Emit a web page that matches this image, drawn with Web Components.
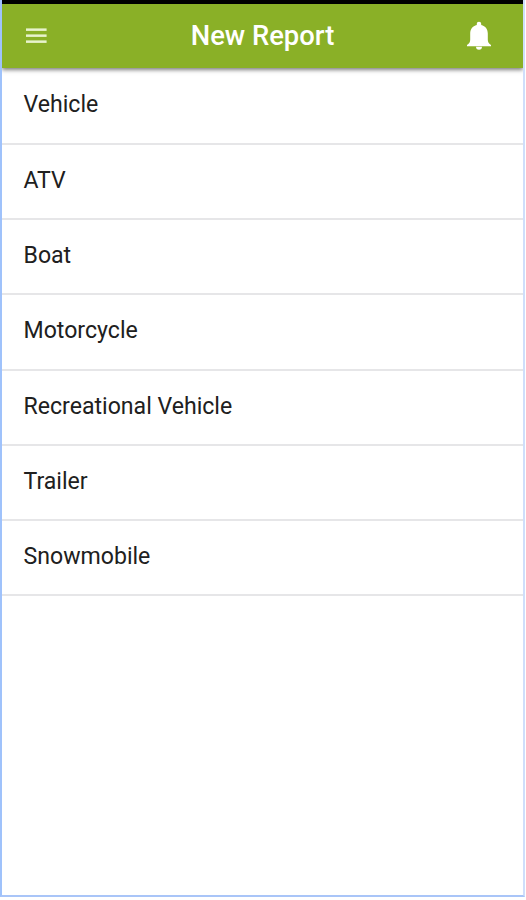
<!DOCTYPE html>
<html lang="en">
<head>
<meta charset="utf-8">
<title>New Report</title>
<style>
html, body { margin: 0; height: 900px; background: #fff; overflow: hidden; }
body { font-family: Roboto, "Noto Sans", sans-serif; }
</style>
</head>
<body>
<report-screen>
  <app-bar slot="bar">New Report</app-bar>
  <list-row>Vehicle</list-row>
  <list-row>ATV</list-row>
  <list-row>Boat</list-row>
  <list-row>Motorcycle</list-row>
  <list-row>Recreational Vehicle</list-row>
  <list-row>Trailer</list-row>
  <list-row>Snowmobile</list-row>
</report-screen>
<script>
function define(name, markup) {
  customElements.define(name, class extends HTMLElement {
    constructor() {
      super();
      this.attachShadow({ mode: "open" }).innerHTML = markup;
    }
  });
}

define("report-screen", `
  <style>
    :host { display: flex; flex-direction: column; box-sizing: border-box; width: 525px; height: 897px;
      border-left: 2px solid #9fc2fb; border-right: 2px solid #cfdefb; border-bottom: 2px solid #a9c5f8; background: #fff; }
    .status { height: 4px; background: #000; flex: none; }
    main { display: flex; flex-direction: column; padding-top: 1.2px; }
  </style>
  <div class="status"></div>
  <slot name="bar"></slot>
  <main><slot></slot></main>`);

define("menu-icon", `
  <style>:host { display: block; width: 22px; height: 16px; } svg { display: block; }</style>
  <svg width="22" height="16" viewBox="0 0 22 16" fill="#e8f3cd">
    <rect x="0" y="0.4" width="20.6" height="2.5"/><rect x="0" y="6.4" width="20.6" height="2.5"/><rect x="0" y="12.4" width="20.6" height="2.5"/>
  </svg>`);

define("bell-icon", `
  <style>:host { display: block; width: 26px; height: 30px; } svg { display: block; }</style>
  <svg width="26" height="30" viewBox="0 0 26 30" fill="#fff">
    <path d="M13 .8c-1.3 0-2.200.9-2.200 2.100v1C6.500 4.900 4.200 8 4.200 12.500v6c0 2.300-.6 3.900-3.200 5.400v1.300h24v-1.300c-2.600-1.500-3.200-3.100-3.200-5.400v-6c0-4.500-2.300-7.600-6.600-8.600v-1C15.200 1.700 14.300.8 13 .8z"/>
    <path d="M10 25.700h6a3 3 0 0 1-6 0z"/>
  </svg>`);

define("app-bar", `
  <style>
    :host { display: grid; grid-template-columns: 100px 1fr 100px; align-items: center; flex: none; height: 64px;
      box-sizing: border-box; background: #8ab027; color: #fff; position: relative;
      box-shadow: 0 2px 4px rgba(0,0,0,.5); clip-path: inset(0 0 -12px 0); }
    h1 { margin: 0; text-align: center; font-size: 27.4px; line-height: 32px; font-weight: 500; white-space: nowrap; }
    menu-icon { margin-left: 23.5px; }
    bell-icon { justify-self: end; margin-right: 31px; }
  </style>
  <menu-icon></menu-icon><h1><slot></slot></h1><bell-icon></bell-icon>`);

define("list-row", `
  <style>
    :host { display: flex; align-items: center; box-sizing: border-box; height: 75.33px; padding: 0 21.5px 1px;
      border-bottom: 2px solid #e6e6e8; color: #202020; font-size: 23.1px; line-height: 28px; }
  </style>
  <slot></slot>`);
</script>
</body>
</html>
